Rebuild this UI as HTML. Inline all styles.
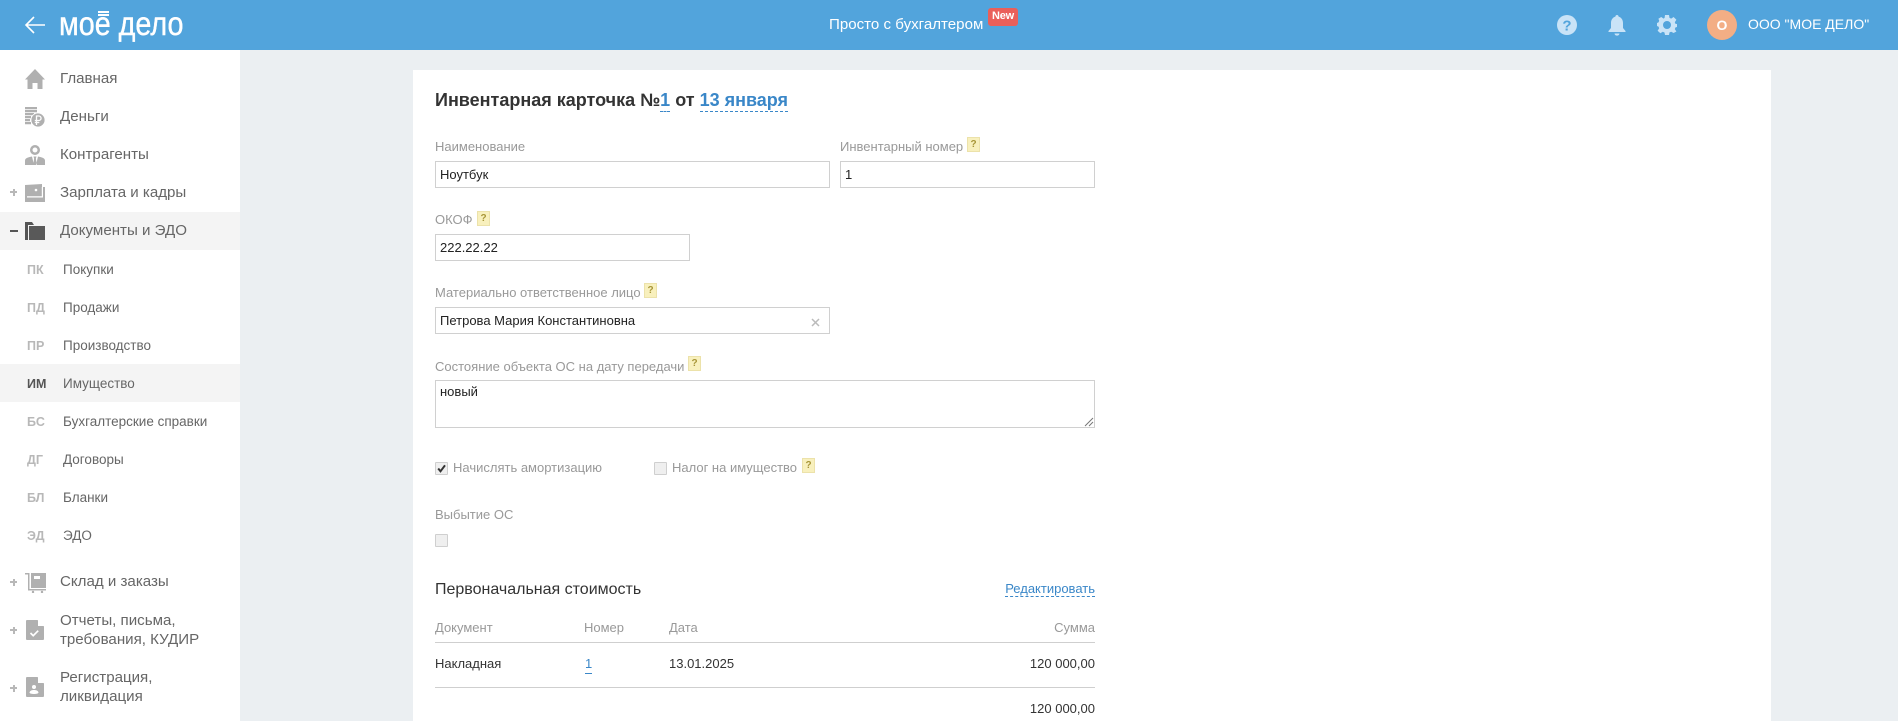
<!DOCTYPE html>
<html lang="ru"><head><meta charset="utf-8"><title>Инвентарная карточка</title>
<style>
html,body{margin:0;padding:0;width:1898px;height:721px;overflow:hidden;background:#ebeff2;font-family:"Liberation Sans",Arial,sans-serif}
div,svg{position:absolute;white-space:nowrap}
.top{left:0;top:0;width:1898px;height:50px;background:#52a4dc}
.side{left:0;top:50px;width:240px;height:671px;background:#fff}
.hl{left:0;width:240px;height:38px;background:#f4f4f4}
.m{left:60px;font-size:15.1px;line-height:20px;color:#666;height:20px}
.s{left:63px;font-size:13.5px;line-height:18px;color:#666;height:18px}
.c{left:27px;font-size:12.5px;font-weight:bold;line-height:18px;color:#b8b8b8;height:18px}
.pm{left:10px;width:7px;height:2px;background:#b8b8b8}
.pv{left:12.500px;width:2px;height:7px;background:#b8b8b8}
.card{left:413px;top:70px;width:1358px;height:651px;background:#fff}
.l{font-size:13px;line-height:16px;color:#999;height:16px}
.t{font-size:13px;line-height:16px;color:#333;height:16px}
.i{box-sizing:border-box;border:1px solid #d0d0d0;height:27px;background:#fff;font-size:13px;line-height:25px;color:#222;padding-left:4px}
.q{width:13px;height:15px;box-sizing:border-box;background:#f8f0bd;border:1px solid #ece2aa;color:#a89638;font-size:10px;line-height:13px;text-align:center;font-weight:bold}
.cb{width:13px;height:13px;box-sizing:border-box;background:#efefef;border:1px solid #cfcfcf;border-radius:1px}
.ln{left:435px;width:660px;height:1px;background:#cfcfcf}
</style></head><body>
<div class="top"></div>
<svg style="left:24px;top:15px" width="22" height="20" viewBox="0 0 22 20"><path d="M21 10H2M10 2L2 10l8 8" fill="none" stroke="#fff" stroke-width="1.600"/></svg>
<div style="left:59px;top:4px;font-size:33px;line-height:40px;color:#fff;height:40px;transform:scaleX(.87);transform-origin:0 0;-webkit-text-stroke:.4px #fff">мое дело</div>
<div style="left:98px;top:11px;width:11px;height:2px;background:#fff"></div>
<div style="left:98px;top:14px;width:11px;height:2px;background:#fff"></div>
<div style="left:829px;top:16px;font-size:15.100px;line-height:18px;color:#fff;height:18px">Просто с бухгалтером</div>
<div style="left:988px;top:8px;width:30px;height:18px;background:#ea5f5a;border-radius:3px;color:#fff;font-size:11px;font-weight:bold;line-height:17px;text-align:center;letter-spacing:-.2px">New</div>
<svg style="left:1557px;top:15px" width="20" height="20" viewBox="0 0 20 20"><circle cx="10" cy="10" r="10" fill="#c9e3f7"/><text x="10" y="15.500" font-family="Liberation Sans" font-size="15" font-weight="bold" text-anchor="middle" fill="#52a4dc">?</text></svg>
<svg style="left:1608px;top:15px" width="18" height="21" viewBox="0 0 18 21"><path d="M9 0c1 0 1.600.7 1.600 1.600C13.500 2.400 15 5 15 8v5l2.500 3v1H.5v-1L3 13V8c0-3 1.500-5.600 4.400-6.400C7.400.7 8 0 9 0zM6.500 18.500h5C11.300 20 10.300 20.600 9 20.600s-2.300-.6-2.500-2.100z" fill="#c9e3f7"/></svg>
<svg style="left:1657px;top:15px" width="20" height="20" viewBox="0 0 20 20"><path d="M8 0h4l.5 2.900 1.700.7L16.600 2l2.800 2.800-1.600 2.400.7 1.700L20 9v3l-1.500.4-.7 1.700 1.600 2.400-2.800 1.500-2.400-1.300-1.700.7L12 20H8l-.5-2.500-1.700-.7-2.400 1.400L.6 15.700l1.600-2.400-.7-1.700L0 11V8l1.500-.6.700-1.700L1.400 3.800 4.200 2l2.400 1.600 1-.7z" fill="#c9e3f7"/><circle cx="10" cy="10" r="4" fill="#52a4dc"/></svg>
<div style="left:1707px;top:10px;width:30px;height:30px;border-radius:50%;background:#f3ae85;color:#fff;font-size:14px;font-weight:bold;line-height:30px;text-align:center">О</div>
<div style="left:1748px;top:15px;font-size:14px;line-height:18px;color:#fff;height:18px">ООО "МОЕ ДЕЛО"</div>

<div class="side"></div>
<div class="hl" style="top:212px"></div>
<div class="hl" style="top:364px"></div>

<svg style="left:25px;top:69px" width="20" height="20" viewBox="0 0 20 20"><path d="M10 0L20 10.500h-2.500V20H12.500v-6h-5v6H2.500v-9.500H0z" fill="#b0b0b0"/></svg>
<svg style="left:25px;top:107px" width="20" height="20" viewBox="0 0 20 20"><path d="M0 0h12v2.300H0zM0 3h12v2.300H0zM0 6h9v2.300H0zM0 9h6v2.300H0zM0 12h5v2.300H0zM0 15h6v2.300H0z" fill="#b0b0b0"/><circle cx="13" cy="13" r="7" fill="#b0b0b0" stroke="#fff" stroke-width=".8"/><path d="M11.500 18V9h2.300a2.200 2.200 0 010 4.500h-4M9.800 15.500h4.500" stroke="#fff" stroke-width="1.300" fill="none"/></svg>
<svg style="left:25px;top:145px" width="20" height="20" viewBox="0 0 20 20"><path d="M10 0a5 5 0 110 10 5 5 0 010-10zm0 2.500a2.500 2.500 0 100 5 2.500 2.500 0 000-5z" fill="#b0b0b0" fill-rule="evenodd"/><path d="M0 20v-4.500C0 13 4 12 7 11.500L9 20zM20 20v-4.500C20 13 16 12 13 11.500L11 20zM8.500 11.500h3l-.6 2 .9 6.500H8.200l.9-6.500z" fill="#b0b0b0"/></svg>
<svg style="left:25px;top:184px" width="20" height="18" viewBox="0 0 20 18"><path d="M0 1L17 0v3h3v15H0z" fill="#b0b0b0"/><path d="M2 13.500h16V3h-1.200v9.300H2z" fill="#fff"/><circle cx="11" cy="6" r="1.300" fill="#fff"/></svg>
<svg style="left:25px;top:222px" width="20" height="18" viewBox="0 0 20 18"><path d="M0 0h7l2 3H3v15H0z" fill="#555"/><path d="M4 4h16v14H4z" fill="#595959"/></svg>
<svg style="left:25px;top:573px" width="21" height="20" viewBox="0 0 21 20"><path d="M0 0h4.500v16H21v1.500H3V1.500H0z" fill="#b0b0b0"/><path d="M6 0h15v15H6z" fill="#b0b0b0"/><path d="M9 3h6v3H9z" fill="#fff"/><circle cx="8" cy="19" r="1.200" fill="#b0b0b0"/><circle cx="17" cy="19" r="1.200" fill="#b0b0b0"/></svg>
<svg style="left:26px;top:620px" width="18" height="20" viewBox="0 0 18 20"><path d="M1 0h10.500L18 6.500V19a1 1 0 01-1 1H1a1 1 0 01-1-1V1a1 1 0 011-1z" fill="#b0b0b0"/><path d="M12 0l6 6h-6z" fill="#fff"/><path d="M4.500 13l2.700 2.700 5-5" stroke="#fff" stroke-width="1.700" fill="none"/></svg>
<svg style="left:26px;top:677px" width="18" height="20" viewBox="0 0 18 20"><path d="M1 0h10.500L18 6.500V19a1 1 0 01-1 1H1a1 1 0 01-1-1V1a1 1 0 011-1z" fill="#b0b0b0"/><path d="M12 0l6 6h-6z" fill="#fff"/><circle cx="8" cy="10" r="2" fill="#fff"/><path d="M3.500 15.500c.5-2 2.500-2.500 4.500-2.500s4 .5 4.500 2.500c0 1-2 1.500-4.500 1.500s-4.500-.5-4.500-1.500z" fill="#fff"/></svg>

<div class="pm" style="top:191px"></div><div class="pv" style="top:188.500px"></div>
<div class="pm" style="top:230px;width:8px;background:#555"></div>
<div class="pm" style="top:581px"></div><div class="pv" style="top:578.500px"></div>
<div class="pm" style="top:629px"></div><div class="pv" style="top:626.500px"></div>
<div class="pm" style="top:687px"></div><div class="pv" style="top:684.500px"></div>

<div class="m" style="top:69px">Главная</div>
<div class="m" style="top:107px">Деньги</div>
<div class="m" style="top:145px">Контрагенты</div>
<div class="m" style="top:183px">Зарплата и кадры</div>
<div class="m" style="top:221px">Документы и ЭДО</div>
<div class="c" style="top:261px">ПК</div><div class="s" style="top:261px">Покупки</div>
<div class="c" style="top:299px">ПД</div><div class="s" style="top:299px">Продажи</div>
<div class="c" style="top:337px">ПР</div><div class="s" style="top:337px">Производство</div>
<div class="c" style="top:375px;color:#555">ИМ</div><div class="s" style="top:375px">Имущество</div>
<div class="c" style="top:413px">БС</div><div class="s" style="top:413px">Бухгалтерские справки</div>
<div class="c" style="top:451px">ДГ</div><div class="s" style="top:451px">Договоры</div>
<div class="c" style="top:489px">БЛ</div><div class="s" style="top:489px">Бланки</div>
<div class="c" style="top:527px">ЭД</div><div class="s" style="top:527px">ЭДО</div>
<div class="m" style="top:572px">Склад и заказы</div>
<div class="m" style="top:611px">Отчеты, письма,</div>
<div class="m" style="top:630px">требования, КУДИР</div>
<div class="m" style="top:668px">Регистрация,</div>
<div class="m" style="top:687px">ликвидация</div>

<div class="card"></div>
<div style="left:435px;top:89px;font-size:18px;font-weight:bold;line-height:22px;height:22px;color:#333">Инвентарная карточка №<span style="color:#3a87c8;border-bottom:1px dashed #3a87c8;padding-bottom:1px">1</span> от <span style="color:#3a87c8;border-bottom:1px dashed #3a87c8;padding-bottom:1px">13 января</span></div>

<div class="l" style="left:435px;top:139px">Наименование</div>
<div class="l" style="left:840px;top:139px">Инвентарный номер</div><div class="q" style="left:967px;top:137px">?</div>
<div class="i" style="left:435px;top:161px;width:395px">Ноутбук</div>
<div class="i" style="left:840px;top:161px;width:255px">1</div>

<div class="l" style="left:435px;top:212px">ОКОФ</div><div class="q" style="left:477px;top:211px">?</div>
<div class="i" style="left:435px;top:234px;width:255px">222.22.22</div>

<div class="l" style="left:435px;top:285px">Материально ответственное лицо</div><div class="q" style="left:644px;top:283px">?</div>
<div class="i" style="left:435px;top:307px;width:395px">Петрова Мария Константиновна</div>
<svg style="left:811px;top:318px" width="9" height="9" viewBox="0 0 9 9"><path d="M1 1l7 7M8 1L1 8" stroke="#bbb" stroke-width="1.500"/></svg>

<div class="l" style="left:435px;top:359px">Состояние объекта ОС на дату передачи</div><div class="q" style="left:688px;top:356px">?</div>
<div class="i" style="left:435px;top:380px;width:660px;height:48px;padding-left:4px;padding-top:1px;line-height:20px">новый</div>
<svg style="left:1084px;top:417px" width="10" height="10" viewBox="0 0 10 10"><path d="M1 9l8-8M5 9l4-4" stroke="#777" stroke-width="1"/></svg>

<div class="cb" style="left:435px;top:462px"></div>
<svg style="left:436px;top:463px" width="11" height="11" viewBox="0 0 11 11"><path d="M2.200 5.500l2.300 2.800 4.500-6" stroke="#333" stroke-width="2" fill="none"/></svg>
<div class="l" style="left:453px;top:460px">Начислять амортизацию</div>
<div class="cb" style="left:654px;top:462px"></div>
<div class="l" style="left:672px;top:460px">Налог на имущество</div><div class="q" style="left:802px;top:458px">?</div>

<div class="l" style="left:435px;top:507px">Выбытие ОС</div>
<div class="cb" style="left:435px;top:534px"></div>

<div style="left:435px;top:580px;font-size:16px;line-height:20px;height:20px;color:#333">Первоначальная стоимость</div>
<div style="right:803px;top:581px;font-size:13px;line-height:15px;height:15px;color:#3a87c8;border-bottom:1px dashed #3a87c8">Редактировать</div>

<div class="l" style="left:435px;top:620px">Документ</div>
<div class="l" style="left:584px;top:620px">Номер</div>
<div class="l" style="left:669px;top:620px">Дата</div>
<div class="l" style="right:803px;top:620px">Сумма</div>
<div class="ln" style="top:642px"></div>
<div class="t" style="left:435px;top:656px">Накладная</div>
<div class="t" style="left:585px;top:656px;color:#3a87c8;border-bottom:1px solid #3a87c8;height:17px">1</div>
<div class="t" style="left:669px;top:656px">13.01.2025</div>
<div class="t" style="right:803px;top:656px">120 000,00</div>
<div class="ln" style="top:687px"></div>
<div class="t" style="right:803px;top:701px">120 000,00</div>
</body></html>
